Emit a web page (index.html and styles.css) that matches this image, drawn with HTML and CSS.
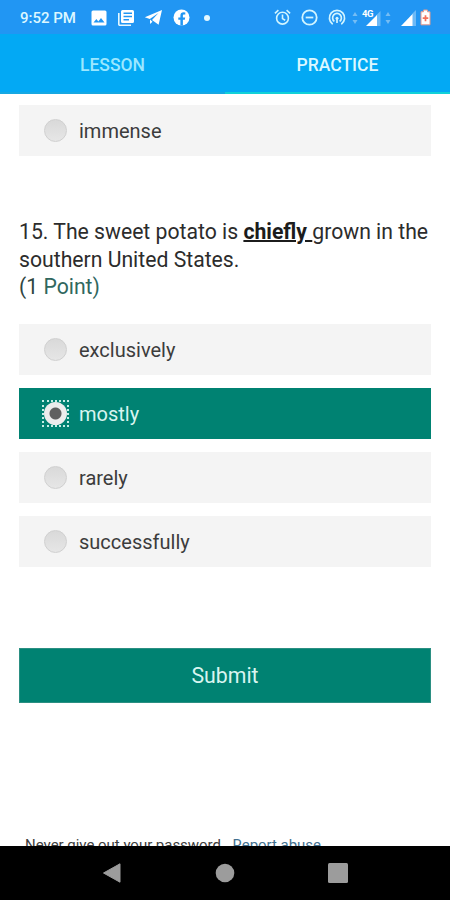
FILE: index.html
```html
<!DOCTYPE html>
<html lang="en">
<head>
<meta charset="utf-8">
<meta name="viewport" content="width=device-width">
<title>Practice</title>
<link rel="stylesheet" href="styles.css">
</head>
<body>
<div class="screen">
  <header class="status">
    <span class="time">9:52 PM</span>
    <div class="notifications">
      <svg width="16" height="16" viewBox="0 0 16 16"><path fill="#fff" fill-rule="evenodd" d="M2 0.5h12a1.500 1.500 0 0 1 1.500 1.500v12a1.500 1.500 0 0 1-1.500 1.500H2A1.500 1.500 0 0 1 .5 14V2A1.500 1.500 0 0 1 2 .5zM2.500 12.500h11L10 8l-2.700 3.400L5.400 9z"/></svg>
      <svg width="18" height="18" viewBox="0 0 18 18"><path fill="#fff" fill-rule="evenodd" d="M5.500 1h10A1.500 1.500 0 0 1 17 2.500v10a1.500 1.500 0 0 1-1.500 1.500h-10A1.500 1.500 0 0 1 4 12.500v-10A1.500 1.500 0 0 1 5.500 1zM6.500 3.500V5H15V3.500zm0 3.300v1.500H15V6.800zm0 3.300v1.500H12v-1.500z"/><path d="M1.800 4v11.200a1 1 0 0 0 1 1H14" fill="none" stroke="#e4f8ff" stroke-width="1.600"/></svg>
      <svg width="19" height="17" viewBox="0 0 19 17"><path fill="#fff" d="M18 1 .8 8.200l5 1.800L14.500 4 8 10.900l6.600 4.900zM6 10.500V15l2.500-2.300z"/></svg>
      <svg width="17" height="17" viewBox="0 0 17 17"><circle cx="8.500" cy="8.500" r="8" fill="#fff"/><path fill="#2196f3" d="M7.400 16.500V10.800H5.300V8.400h2.100V6.600c0-2.200 1.300-3.300 3.200-3.300l1.700.1v2.100h-1.100c-1 0-1.300.5-1.300 1.200v1.700h2.300l-.4 2.400H9.900v5.700z"/></svg>
      <i class="dot"></i>
    </div>
    <div class="system">
      <svg class="alarm" width="17" height="17" viewBox="0 0 17 17" fill="none" stroke="#d2f5ff" stroke-width="1.600"><circle cx="8.500" cy="9.200" r="5.900"/><path d="M8.500 5.600v4l2.700 1.700M.9 4.300 4.400 1.200M12.600 1.200l3.500 3.100"/></svg>
      <svg class="dnd" width="17" height="17" viewBox="0 0 17 17" fill="none" stroke="#d2f5ff" stroke-width="1.800"><circle cx="8.500" cy="8.500" r="7.200"/><path d="M4.700 8.500h7.600"/></svg>
      <svg class="hotspot" width="18" height="17" viewBox="0 0 18 17" fill="none" stroke="#d2f5ff" stroke-width="1.700"><path d="M4.700 15.200a7.600 7.600 0 1 1 8.600 0M6.400 12.400a4.400 4.400 0 1 1 5.200 0"/><circle cx="9" cy="9.300" r="1.500" fill="#d2f5ff" stroke="none"/><path d="M9 9v5"/></svg>
      <svg class="data" width="6" height="14" viewBox="0 0 6 14"><path fill="#75bdf4" d="M3 1 5.500 5H.5zM3 13 .5 9h5z"/></svg>
      <svg class="mobile" width="19" height="18" viewBox="0 0 19 18"><path fill="#6bb9f7" d="M14 6.500l4.500-4.500v15H14z"/><path fill="#fff" d="M4 17 15 6V17z"/><text x="0" y="8" class="network">4G</text></svg>
      <svg class="data" width="6" height="14" viewBox="0 0 6 14"><path fill="#75bdf4" d="M3 1 5.500 5H.5zM3 13 .5 9h5z"/></svg>
      <svg class="signal" width="15" height="16" viewBox="0 0 15 16"><path fill="#6bb9f7" d="M11 4l4-4v16h-4z"/><path fill="#fff" d="M0 16 11.500 4v12z"/></svg>
      <svg class="battery" width="11" height="17" viewBox="0 0 11 17"><path d="M3.500 1h4v1.800H10v13H1v-13h2.500z" fill="#fff" stroke="#e69a8d"/><path d="M5.500 6.200v6M2.700 9.200h5.600" stroke="#f4705a" stroke-width="1.700"/></svg>
    </div>
  </header>
  <nav class="tabs">
    <a class="tab">LESSON</a>
    <a class="tab tab-active">PRACTICE</a>
  </nav>
  <main class="content">
    <div class="option"><i class="radio"></i><span>immense</span></div>
    <section class="question">
      <p class="prompt"><span class="line1">15. The sweet potato is <b>chiefly </b>grown in the</span><br><span class="line2">southern United States.</span></p>
      <p class="points"><span>(1</span> Point)</p>
    </section>
    <div class="options">
      <div class="option"><i class="radio"></i><span>exclusively</span></div>
      <div class="option option-selected"><i class="radio radio-checked"></i><span>mostly</span></div>
      <div class="option"><i class="radio"></i><span>rarely</span></div>
      <div class="option"><i class="radio"></i><span>successfully</span></div>
    </div>
    <button class="submit">Submit</button>
    <p class="notice">Never give out your password. <a>Report abuse</a></p>
  </main>
  <footer class="navbar">
    <svg width="20" height="22" viewBox="0 0 20 22"><path d="M19 1.800v18.400L2.500 11z" fill="#9c9c9c" stroke="#9c9c9c" stroke-linejoin="round"/></svg>
    <svg width="20" height="20" viewBox="0 0 20 20"><circle cx="10" cy="10" r="9.300" fill="#9c9c9c"/></svg>
    <svg width="20" height="20" viewBox="0 0 20 20"><rect width="20" height="20" rx="1.500" fill="#9c9c9c"/></svg>
  </footer>
</div>
</body>
</html>
```

FILE: styles.css
```css
* { box-sizing: border-box; }
body { margin: 0; font-family: Roboto, "Liberation Sans", sans-serif; }
p { margin: 0; }
svg { display: block; flex: none; }

.screen { width: 450px; height: 900px; display: flex; flex-direction: column; overflow: hidden; background: #fff; }

.status { height: 34px; flex: none; display: flex; align-items: center; padding: 1px 19px 0 20px; background: #2196f3; }
.time { width: 71px; font-size: 15px; font-weight: 500; line-height: 20px; color: #dcf7ff; white-space: nowrap; }
.notifications { display: flex; align-items: center; gap: 9.500px; }
.dot { width: 6px; height: 6px; margin-left: 5px; border-radius: 50%; background: #e4f8ff; }
.system { margin-left: auto; display: flex; align-items: center; }
.dnd { margin-left: 10px; }
.hotspot { margin-left: 10.500px; }
.data { margin-left: 6px; }
.mobile { margin-left: 4px; }
.mobile + .data { margin-left: 4px; }
.signal { margin-left: 10px; }
.battery { margin-left: 4px; }
.network { font: 700 9.500px Roboto, sans-serif; fill: #fff; letter-spacing: -0.5px; }

.tabs { height: 60px; flex: none; display: flex; background: #03a9f4; }
.tab { flex: 1; padding-top: 21px; text-align: center; font-size: 17.500px; font-weight: 500; line-height: 21px; color: #9be7ff; border-bottom: 2px solid #16a8e2; }
.tab-active { color: #dcf8ff; border-bottom-color: #12d1d8; }

.content { flex: 1; min-height: 0; overflow: hidden; padding: 11px 19px 0; }
.option { height: 51px; display: flex; align-items: center; padding-left: 25px; background: #f4f4f4; color: #3c3c3c; font-size: 20px; }
.option span { margin-left: 12px; padding-top: 1px; }
.options .option span { padding-top: 2px; }
.radio { width: 23px; height: 23px; flex: none; border-radius: 50%; border: 1px solid #d0d0d0; background: linear-gradient(#d9d9d9, #e6e6e6); }
.option-selected { background: #008272; color: #d9f5f0; }
.radio-checked { position: relative; border: 0; background: radial-gradient(circle, #606060 5.500px, #ececec 6.500px); }
.radio-checked::after { content: ""; position: absolute; inset: -2px; border: 2px dotted #c5eee6; }

.question { padding-top: 62px; font-size: 21.200px; line-height: 27.500px; color: #2c2c2c; white-space: nowrap; }
.prompt b { font-weight: 700; color: #1c1c1c; text-decoration: underline; text-decoration-thickness: 2px; text-decoration-skip-ink: auto; }
.points { color: #30675e; }
.points span { color: #2f4541; }
.options { display: grid; gap: 13px; margin-top: 23px; }
.submit { display: block; width: 100%; height: 55px; margin-top: 81px; padding: 0; border: 1px solid #2b8f82; background: #008272; color: #d9f5f0; font: 400 21.300px Roboto, sans-serif; }
.notice { margin-top: 133px; padding-left: 6px; font-size: 15px; line-height: 18px; letter-spacing: -0.03px; color: #3c3c3c; white-space: nowrap; }
.notice a { margin-left: 4px; color: #42708f; }

.navbar { height: 54px; flex: none; display: flex; align-items: center; justify-content: space-between; padding: 0 102px 0 101px; background: #000; }
```
